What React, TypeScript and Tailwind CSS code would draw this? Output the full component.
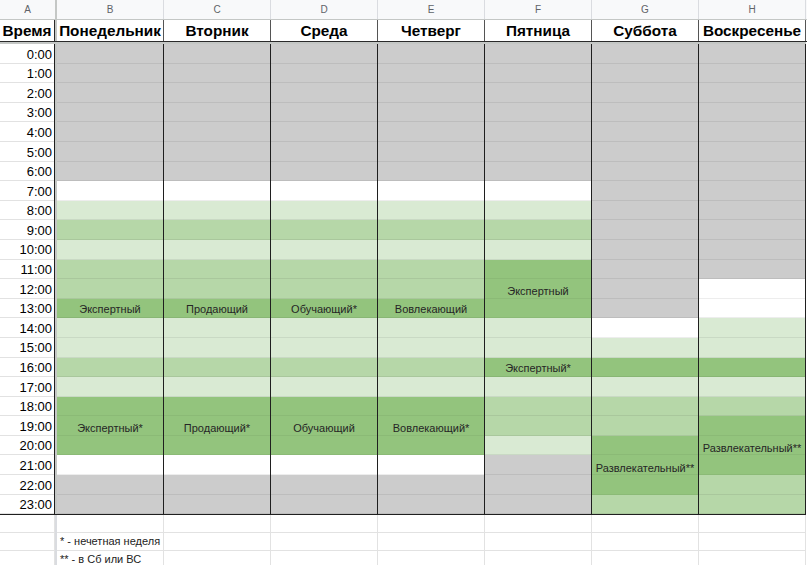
type Seg = { c: 'G' | 'W' | 'L' | 'M' | 'D'; n?: number; t?: string };

const BG: Record<string, string> = {
  G: 'bg-[#cccccc]',
  W: 'bg-white',
  L: 'bg-[#d9ead3]',
  M: 'bg-[#b6d7a8]',
  D: 'bg-[#93c47d]',
};

const rep = (c: Seg['c'], k: number): Seg[] => Array.from({ length: k }, () => ({ c }));

const weekday = (a: string, b: string): Seg[] => [
  ...rep('G', 7),
  { c: 'W' },
  { c: 'L' },
  { c: 'M' },
  { c: 'L' },
  { c: 'M' },
  { c: 'M' },
  { c: 'D', t: a },
  { c: 'L' },
  { c: 'L' },
  { c: 'M' },
  { c: 'L' },
  { c: 'D', n: 3, t: b },
  { c: 'W' },
  ...rep('G', 2),
];

const days: { letter: string; name: string; segs: Seg[] }[] = [
  { letter: 'B', name: 'Понедельник', segs: weekday('Экспертный', 'Экспертный*') },
  { letter: 'C', name: 'Вторник', segs: weekday('Продающий', 'Продающий*') },
  { letter: 'D', name: 'Среда', segs: weekday('Обучающий*', 'Обучающий') },
  { letter: 'E', name: 'Четверг', segs: weekday('Вовлекающий', 'Вовлекающий*') },
  {
    letter: 'F',
    name: 'Пятница',
    segs: [
      ...rep('G', 7),
      { c: 'W' },
      { c: 'L' },
      { c: 'M' },
      { c: 'L' },
      { c: 'D', n: 3, t: 'Экспертный' },
      { c: 'L' },
      { c: 'L' },
      { c: 'D', t: 'Экспертный*' },
      { c: 'L' },
      { c: 'M' },
      { c: 'M' },
      { c: 'L' },
      ...rep('G', 3),
    ],
  },
  {
    letter: 'G',
    name: 'Суббота',
    segs: [
      ...rep('G', 14),
      { c: 'W' },
      { c: 'L' },
      { c: 'D' },
      { c: 'L' },
      { c: 'M' },
      { c: 'M' },
      { c: 'D', n: 3, t: 'Развлекательный**' },
      { c: 'M' },
    ],
  },
  {
    letter: 'H',
    name: 'Воскресенье',
    segs: [
      ...rep('G', 12),
      { c: 'W' },
      { c: 'W' },
      { c: 'L' },
      { c: 'L' },
      { c: 'D' },
      { c: 'L' },
      { c: 'M' },
      { c: 'D', n: 3, t: 'Развлекательный**' },
      { c: 'M' },
      { c: 'M' },
    ],
  },
];

const hours = Array.from({ length: 24 }, (_, i) => `${i}:00`);

function Cell({ seg }: { seg: Seg }) {
  const n = seg.n ?? 1;
  if (n === 1) {
    return (
      <div
        className={`h-[19.6px] border-b border-black/[0.07] flex items-center justify-center pt-[3px] overflow-hidden whitespace-nowrap text-[11px] text-[#262626] ${BG[seg.c]}`}
      >
        {seg.t}
      </div>
    );
  }
  return (
    <div className={`relative ${BG[seg.c]}`}>
      {Array.from({ length: n }, (_, i) => (
        <div key={i} className="h-[19.6px] border-b border-black/[0.05]" />
      ))}
      {/* merged cell label sits across the row lines */}
      <div className="absolute inset-0 flex items-center justify-center pt-[5px] overflow-hidden whitespace-nowrap text-[11px] text-[#262626]">
        {seg.t}
      </div>
    </div>
  );
}

export default function App() {
  return (
    <div className="w-[807px] h-[565px] overflow-hidden bg-white font-['Liberation_Sans',Arial,sans-serif] text-black">
      {/* column letters */}
      <div className="flex h-[20px] bg-[#f8f9fa] border-b border-[#c4c7c5] text-[10px] text-[#5f6368]">
        <div className="w-[55px] flex items-center justify-center">A</div>
        <div className="w-[2px] bg-[#c4c7c5]" />
        {days.map((d) => (
          <div key={d.letter} className="w-[107px] border-r border-[#dadce0] flex items-center justify-center">
            {d.letter}
          </div>
        ))}
      </div>

      {/* day names */}
      <div className="flex h-[22px] border-b border-[#2a2a2a] text-[15.3px] font-bold">
        <div className="w-[55px] border-r border-[#2a2a2a] flex items-center justify-center pt-[1px] whitespace-nowrap">
          Время
        </div>
        <div className="w-[2px] bg-[#c4c7c5]" />
        {days.map((d) => (
          <div
            key={d.letter}
            className="w-[107px] border-r border-[#555] flex items-center justify-center pt-[1px] whitespace-nowrap overflow-hidden"
          >
            {d.name}
          </div>
        ))}
      </div>
      <div className="h-[2px] bg-[#c4c7c5] w-[806px]" />

      {/* schedule */}
      <div className="flex w-[806px] border-b border-[#1f1f1f]">
        <div className="w-[55px] border-r border-[#1f1f1f]">
          {hours.map((h) => (
            <div key={h} className="h-[19.6px] border-b border-[#e2e2e2] flex items-center justify-end pt-[2px] pr-[2px] text-[13px]">
              {h}
            </div>
          ))}
        </div>
        <div className="w-[2px] bg-[#c4c7c5]" />
        {days.map((d) => (
          <div key={d.letter} className="w-[107px] border-r border-[#1f1f1f] flex flex-col">
            {d.segs.map((s, i) => (
              <Cell key={i} seg={s} />
            ))}
          </div>
        ))}
      </div>

      {/* notes */}
      {['', '* - нечетная неделя', '** - в Сб или ВС'].map((note, r) => (
        <div key={r} className="flex h-[17.7px]">
          <div className="w-[55px] border-r border-b border-[#e2e2e2]" />
          <div className="w-[2px] bg-[#dadce0]" />
          {days.map((d, i) => (
            <div
              key={d.letter}
              className="w-[107px] border-r border-b border-[#e2e2e2] flex items-center pl-[3px] whitespace-nowrap text-[11px] text-[#222]"
            >
              {i === 0 ? note : ''}
            </div>
          ))}
        </div>
      ))}
    </div>
  );
}
